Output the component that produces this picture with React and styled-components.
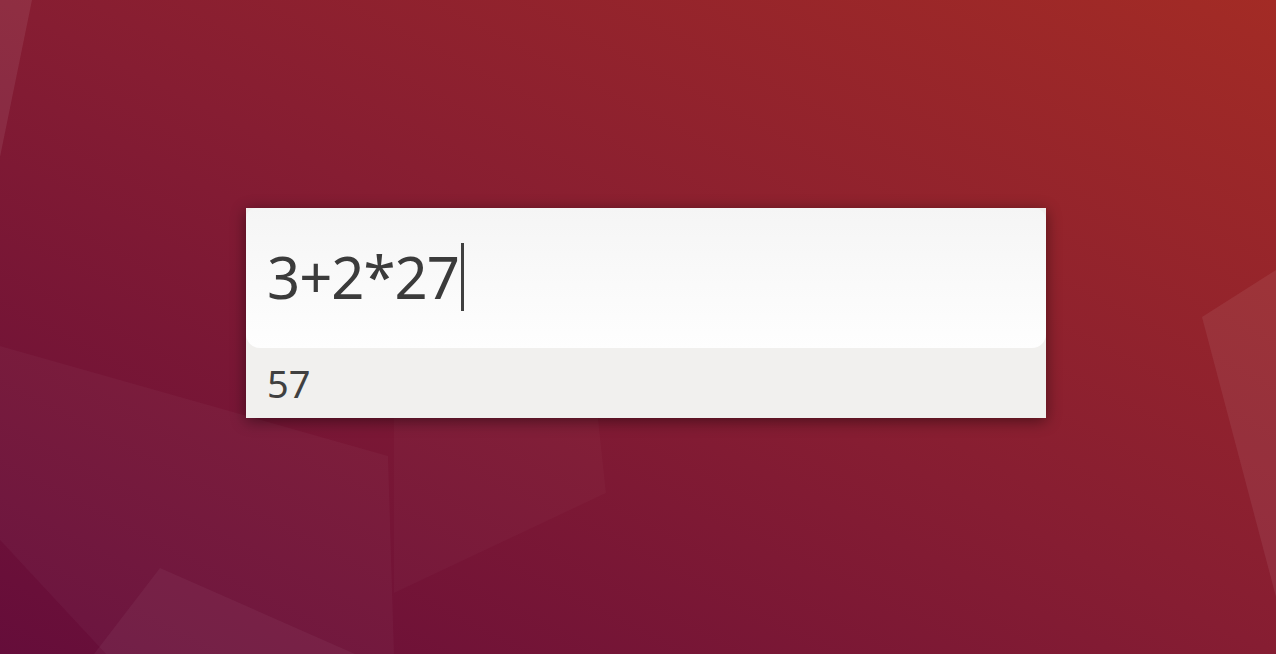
import React from "react";
import styled, { createGlobalStyle } from "styled-components";

const GlobalStyle = createGlobalStyle`
  html, body {
    margin: 0;
    padding: 0;
    width: 100%;
    height: 100%;
    overflow: hidden;
  }
  #root {
    height: 100%;
  }
`;

// wallpaper facets: [points, opacity]
const facets = [
  ["0,0 32,0 0,157", 0.08],
  ["0,346 388,456 394,654 106,654 0,540", 0.03],
  ["160,568 355,654 94,654", 0.045],
  ["394,418 598,418 606,493 394,593", 0.025],
  ["1276,270 1202,317 1276,597", 0.07],
];

const App = () => {
  return (
    <Desktop>
      <GlobalStyle />
      <Wallpaper viewBox="0 0 1276 654" preserveAspectRatio="none">
        {facets.map(([points, opacity], index) => (
          <polygon key={index} points={points} fill="#fff" fillOpacity={opacity} />
        ))}
      </Wallpaper>
      <Launcher>
        <EntryPanel>
          <EntryText>3+2*27</EntryText>
          <Caret />
        </EntryPanel>
        <ResultRow>57</ResultRow>
      </Launcher>
    </Desktop>
  );
};

export default App;

const Desktop = styled.div`
  position: relative;
  box-sizing: border-box;
  width: 100%;
  height: 100%;
  padding: 208px 0 0 246px;
  background: linear-gradient(to top right, #650d3a 0%, #861d32 50%, #a32b25 100%);
  font-family: "Noto Sans", "Open Sans", sans-serif;
`;

const Wallpaper = styled.svg`
  position: absolute;
  inset: 0;
  width: 100%;
  height: 100%;
  z-index: 0;
`;

const Launcher = styled.div`
  position: relative;
  z-index: 1;
  width: 800px;
  display: flex;
  flex-direction: column;
  background-color: #f1f0ee;
  box-shadow: 0 3px 14px rgba(0, 0, 0, 0.45);
`;

const EntryPanel = styled.div`
  height: 140px;
  display: flex;
  align-items: center;
  padding: 0 0 3px 21px;
  box-sizing: border-box;
  border-radius: 10px 12px 14px 14px;
  background: linear-gradient(to bottom, #f5f5f5 0%, #fefefe 100%);
`;

const EntryText = styled.span`
  font-size: 58px;
  line-height: 68px;
  letter-spacing: -1px;
  color: #3b3b3b;
`;

const Caret = styled.span`
  width: 3px;
  height: 68px;
  margin-left: 2px;
  background-color: #404040;
`;

const ResultRow = styled.div`
  height: 70px;
  display: flex;
  align-items: center;
  padding-left: 21px;
  font-size: 38px;
  color: #404040;
`;
